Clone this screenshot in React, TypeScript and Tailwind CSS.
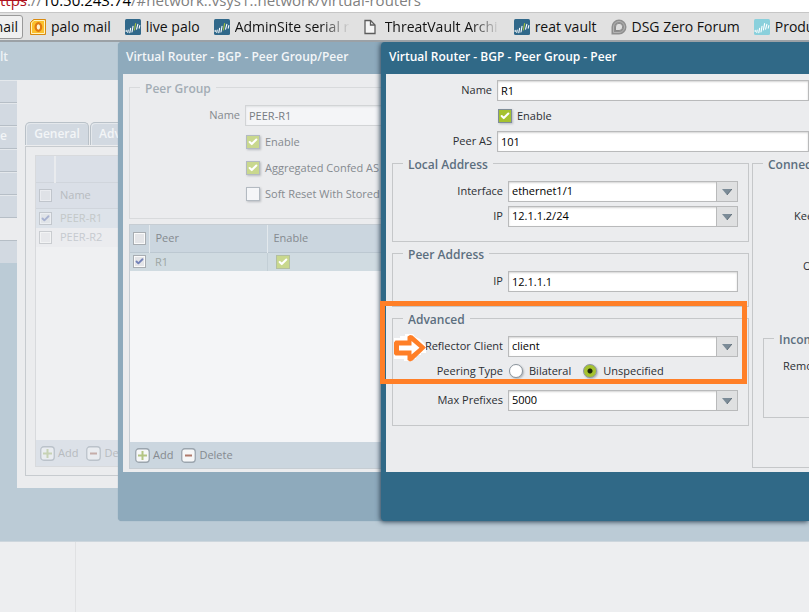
import React from "react";
import { Check } from "lucide-react";
import clsx from "clsx";

/* ─── ICONS ─── */

function PaloIcon({ light }: { light?: boolean }) {
  return (
    <svg viewBox="0 0 16 16" className="w-4 h-4 shrink-0" aria-hidden="true">
      <rect width="16" height="16" rx="1.5" fill={light ? "#8ad0dc" : "#30688a"} />
      <g stroke="#fff" strokeWidth="1.1" strokeLinecap="round">
        <path d="M1.2 11.4v1M3.2 11l-.4 2.4M5.6 9.4l-.8 4.2M8 7.4l-1 5.6M12.8 5.4l-1.2 4.8M14.8 6.6l-.6 2.6" />
        <path d="M10.6 4.6L9.4 11" stroke={light ? "#fff" : "#a6c43a"} />
      </g>
    </svg>
  );
}

function OutlookIcon() {
  return (
    <svg viewBox="0 0 16 16" className="w-4 h-4 shrink-0" aria-hidden="true">
      <path d="M3.5.5h12v15H.5V3.5z" fill="#fbc02d" stroke="#d98a10" />
      <path d="M1.5 4L4 1.5h10.5v13h-13z" fill="none" stroke="#fff3bf" />
      <ellipse cx="8.4" cy="8" rx="2.8" ry="3.8" fill="#fff3d0" stroke="#e07a10" strokeWidth="2.2" />
    </svg>
  );
}

function PageIcon() {
  return (
    <svg viewBox="0 0 16 16" className="w-4 h-4 shrink-0" aria-hidden="true">
      <path d="M1 1.5h5.5L11 6v8.5H1z" fill="#f5f5f5" stroke="#5c5c5c" strokeWidth="1.3" />
      <path d="M6.5 1.5V6H11" fill="none" stroke="#5c5c5c" strokeWidth="1.3" />
    </svg>
  );
}

function ForumIcon() {
  return (
    <svg viewBox="0 0 16 16" className="w-4 h-4 shrink-0" aria-hidden="true">
      <path d="M.5 15.5V8A7.5 7.5 0 1 1 8 15.5z" fill="#8f8f8f" />
      <path d="M2.5 13.5V8A5.5 5.5 0 1 1 8 13.5z" fill="none" stroke="#b4b4b4" strokeWidth="1" />
      <path d="M4.5 11.5V8A3.6 3.6 0 1 1 8.2 11.5z" fill="#dedede" stroke="#7d7d7d" strokeWidth=".8" />
    </svg>
  );
}

function ToolIcon({ kind, faint }: { kind: "add" | "delete"; faint?: boolean }) {
  const add = kind === "add";
  return (
    <svg viewBox="0 0 15 15" className={clsx("w-[15px] h-[15px] shrink-0", faint && "opacity-50")} aria-hidden="true">
      <rect x=".75" y=".75" width="13.5" height="13.5" rx="3" fill="#f6f7f8" stroke="#9ba5ae" strokeWidth="1.3" />
      <path d={add ? "M7.5 3v9M3 7.5h9" : "M4 7.5h7"} stroke={add ? "#b4c583" : "#b07a6c"} strokeWidth="2" />
    </svg>
  );
}

/* ─── FORM CONTROLS ─── */

const inputCls =
  "w-full h-[21px] px-[3px] border border-[#b9babb] bg-white text-black shadow-[inset_0_1px_2px_#d4d4d4] outline-none rounded-none";

function Row({ label, id, children }: { label?: string; id?: string; children: React.ReactNode }) {
  return (
    <div className="flex items-start gap-[5px]">
      <label htmlFor={id} className="w-[100px] h-5 leading-5 shrink-0 text-right whitespace-nowrap">{label}</label>
      <div className="flex-1 min-w-0">{children}</div>
    </div>
  );
}

function Combo({ id, value }: { id: string; value: string }) {
  return (
    <div className="relative">
      <select id={id} defaultValue={value} className={clsx(inputCls, "appearance-none pr-6")}>
        <option>{value}</option>
      </select>
      <span className="absolute top-0 right-0 w-[22px] h-[21px] flex items-center justify-center bg-[#dfe0e1] border border-[#b9babb] pointer-events-none">
        <svg viewBox="0 0 10 6" className="w-[10px] h-[6px]" aria-hidden="true">
          <path d="M0 0h10L5 6z" fill="#7b8b97" />
          <path d="M10 0L5 6" stroke="#4f5c67" strokeWidth=".8" />
        </svg>
      </span>
    </div>
  );
}

function Tick({ label, checked, faded }: { label: string; checked?: boolean; faded?: boolean }) {
  return (
    <label className="flex items-center gap-[5px] h-5 pl-px whitespace-nowrap">
      <span className="relative w-3.5 h-3.5 shrink-0">
        <input
          type="checkbox"
          defaultChecked={checked}
          className={clsx(
            "peer block appearance-none w-3.5 h-3.5 border bg-[#f5f6f8] shadow-[1px_1px_2px_#b9bcc0]",
            faded ? "border-[#b3bac1] checked:bg-[#c9d88e]" : "border-[#7f8d98] checked:bg-[#a5c22f]"
          )}
        />
        <Check strokeWidth={5} className="absolute top-0.5 left-0.5 w-2.5 h-2.5 text-white hidden peer-checked:block pointer-events-none" />
      </span>
      <span>{label}</span>
    </label>
  );
}

function GridCheck({ name, checked, faint }: { name: string; checked?: boolean; faint?: boolean }) {
  return (
    <span className={clsx("relative block w-[13px] h-[13px] mx-auto", faint && "opacity-50")}>
      <input
        type="checkbox"
        aria-label={name}
        defaultChecked={checked}
        className="block appearance-none w-[13px] h-[13px] border border-[#a8adb2] bg-[#e4e5e8] shadow-[inset_0_0_0_1px_#fafafa]"
      />
      {checked && <Check strokeWidth={5} className="absolute top-0.5 left-0.5 w-[9px] h-[9px] text-[#7483b8] pointer-events-none" />}
    </span>
  );
}

function Group({ title, className, titleClass, children }: {
  title: string;
  className?: string;
  titleClass?: string;
  children: React.ReactNode;
}) {
  return (
    <fieldset className={clsx("min-w-0 border px-2.5 pt-2", className)}>
      <legend className={clsx("px-[5px] h-5 pt-1 leading-4 text-[12px] font-semibold whitespace-nowrap", titleClass)}>{title}</legend>
      {children}
    </fieldset>
  );
}

/* ─── BROWSER CHROME ─── */

const bookmarks = [
  { label: "palo mail", icon: <OutlookIcon /> },
  { label: "live palo", icon: <PaloIcon /> },
  { label: "AdminSite serial r", icon: <PaloIcon />, fade: true },
  { label: "ThreatVault Archi", icon: <PageIcon />, fade: true },
  { label: "reat vault", icon: <PaloIcon /> },
  { label: "DSG Zero Forum", icon: <ForumIcon /> },
  { label: "Produ", icon: <PaloIcon light /> },
];

function BrowserBars() {
  return (
    <header className="shrink-0 whitespace-nowrap">
      <div className="h-3 flex items-end overflow-hidden bg-white text-[15px] leading-6 text-[#808080]">
        <p>
          <span className="text-[#b01020] line-through">ttps</span>://<span className="text-black">10.50.243.74</span>
          /#network::vsys1::network/virtual-routers
        </p>
      </div>
      <nav className="h-[30px] flex items-center gap-3.5 overflow-hidden border-t border-b-2 border-t-[#c6c6c6] border-b-[#9ba1a6] bg-[#e1e1e1] text-[14px] text-[#111]">
        <a href="#mail" className="-ml-1 -mr-[7px] h-6 w-[27px] shrink-0 flex items-center justify-end pr-1 border border-[#999] rounded-[3px] bg-[#f0f0f0]">mail</a>
        {bookmarks.map((b) => (
          <a key={b.label} href="#bookmark" className="flex items-center gap-[5px] shrink-0">
            {b.icon}
            <span className={clsx(b.fade && "w-[115px] overflow-hidden bg-linear-to-r from-[#111] from-75% to-transparent bg-clip-text text-transparent")}>
              {b.label}
            </span>
          </a>
        ))}
      </nav>
    </header>
  );
}

/* ─── WINDOWS ─── */

function RouterWindow() {
  return (
    <section className="absolute top-0 inset-x-0 pb-[53px] bg-[#bbcbd6] border-b border-[#cdd6dd] text-[#b7bbbf]">
      <h2 className="h-[38px] leading-[30px] text-[12px] font-semibold text-[#eef2f5]">lt</h2>
      <div className="flex">
        <ul className="w-[17px] shrink-0 text-[12px] font-semibold text-[#f3f5f7]">
          {["", "", "e", "", "", ""].map((t, i) => (
            <li key={i} className="h-[23px] leading-[20px] bg-[#d2d9e1] border-b border-[#b6bec6] shadow-[inset_0_1px_0_#e4e8ec]">{t}</li>
          ))}
          <li className="h-[22px] bg-[#ebecee]" />
          <li className="h-[23px] bg-[#d2d9e1] border-t border-[#b6bec6]" />
        </ul>
        <div className="flex-1 min-w-0 bg-[#ebecee] pt-[42px] pl-2 pb-3">
          <div className="flex gap-px font-semibold text-[12px] text-[#f3f5f7]" role="tablist">
            <button role="tab" className="w-16 h-[23px] border border-b-0 border-[#b9c1c8] rounded-t-[5px] bg-[#d2d9e1] shadow-[inset_1px_1px_0_#e4e8ec]">General</button>
            <button role="tab" className="w-20 h-[23px] pl-2 text-left border border-b-0 border-[#b9c1c8] rounded-t-[5px] bg-[#d2d9e1] shadow-[inset_1px_1px_0_#e4e8ec]">Adv</button>
          </div>
          <div className="mt-px pt-2 pl-[9px] pb-2 border border-[#c7cbcf]">
            <div className="border border-[#d8dadd] bg-[#eff0f2]">
              <table className="w-full table-fixed border-collapse text-left">
                <colgroup><col className="w-[19px]" /><col /></colgroup>
                <thead className="bg-[#dadfe7]">
                  <tr className="h-[26px] border-b border-[#d0d5dc]">
                    <td className="border-r-2 border-[#e9ebee]" /><td />
                  </tr>
                  <tr className="h-[26px] border-b border-[#d0d5dc]">
                    <td><GridCheck name="Select all peer groups" faint /></td>
                    <th className="pl-[5px] font-normal">Name</th>
                  </tr>
                </thead>
                <tbody>
                  <tr className="h-5 bg-[#dde3ea]">
                    <td><GridCheck name="Select PEER-R1" checked faint /></td>
                    <td className="pl-[5px] text-[#c3c8c8]">PEER-R1</td>
                  </tr>
                  <tr className="h-[19px] bg-[#ebecef]">
                    <td><GridCheck name="Select PEER-R2" faint /></td>
                    <td className="pl-[5px] text-[#c6cacf]">PEER-R2</td>
                  </tr>
                </tbody>
              </table>
              <div className="h-[193px]" />
              <div className="h-[26px] pl-1 flex items-center gap-2 bg-[#dce1e8]">
                <button className="flex items-center gap-[3px]"><ToolIcon kind="add" faint />Add</button>
                <button className="flex items-center gap-[3px]"><ToolIcon kind="delete" faint />De</button>
              </div>
            </div>
          </div>
        </div>
      </div>
    </section>
  );
}

function PeerGroupWindow() {
  return (
    <section className="absolute top-0 left-[118px] right-0 pl-[5px] pb-[49px] rounded-[4px] bg-[#8eaabc] shadow-[0_0_1px_#7f9bae] text-[#858a8f]">
      <h2 className="h-8 leading-[30px] pl-[3px] text-[12px] font-semibold text-[#f3f6f8]">Virtual Router - BGP - Peer Group/Peer</h2>
      <div className="bg-[#ebecee] pt-[3px] pl-1.5 pb-[3px]">
        <Group title="Peer Group" className="border-[#d8dadc] pb-3.5" titleClass="text-[#a3adb5]">
          <div className="flex flex-col gap-1.5">
            <Row label="Name" id="group-name">
              <input id="group-name" defaultValue="PEER-R1" className="w-full h-[21px] px-[3px] border border-[#d2d4d6] bg-[#f4f5f7] text-[#777c82] shadow-[inset_0_1px_2px_#dfe1e3] outline-none" />
            </Row>
            <Row><Tick label="Enable" checked faded /></Row>
            <Row><Tick label="Aggregated Confed AS" checked faded /></Row>
            <Row><Tick label="Soft Reset With Stored" faded /></Row>
          </div>
        </Group>
        <div className="mt-[5px] border border-[#c6cdd3] bg-[#f4f5f7]">
          <table className="w-full table-fixed border-collapse text-left">
            <colgroup><col className="w-[19px]" /><col className="w-[118px]" /><col /></colgroup>
            <thead>
              <tr className="h-[27px] bg-[#cbd6df] border-b border-[#bcc8d1]">
                <td className="border-r border-[#e3e9ed]"><GridCheck name="Select all peers" /></td>
                <th className="pl-1.5 font-normal border-r border-[#e3e9ed]">Peer</th>
                <th className="pl-1.5 font-normal">Enable</th>
              </tr>
            </thead>
            <tbody>
              <tr className="h-[19px] bg-[#d0dbe1]">
                <td><GridCheck name="Select R1" checked /></td>
                <td className="pl-1.5 text-[#9da6a3] border-r border-[#c3cfd6]">R1</td>
                <td className="pl-2">
                  <span className="flex items-center justify-center w-3.5 h-3.5 bg-[#c9d88e] border border-[#b3bfa0]">
                    <Check strokeWidth={5} className="w-2.5 h-2.5 text-white" />
                  </span>
                </td>
              </tr>
            </tbody>
          </table>
          <div className="h-[171px]" />
          <div className="h-[26px] pl-[5px] flex items-center gap-2 bg-[#cbd6df]">
            <button className="flex items-center gap-[3px]"><ToolIcon kind="add" />Add</button>
            <button className="flex items-center gap-[3px]"><ToolIcon kind="delete" />Delete</button>
          </div>
        </div>
      </div>
    </section>
  );
}

const radioCls =
  "appearance-none w-3.5 h-3.5 rounded-full border border-[#8a949c] bg-white shadow-[1px_1px_2px_#b0b4b8] checked:bg-[radial-gradient(circle,#1c2408_2px,#a5c22f_3px)]";

function PeerWindow() {
  return (
    <section className="absolute top-0 left-[381px] right-0 pl-[5px] pb-[49px] rounded-l-[4px] bg-[#306987] shadow-[-1px_1px_5px_#33485a] text-[#2b2f33]">
      <h2 className="h-8 leading-[30px] pl-[3px] text-[12px] font-semibold text-white">Virtual Router - BGP - Peer Group - Peer</h2>
      <div className="bg-[#ebecee] pt-1.5 pl-1.5 pb-1 overflow-hidden">
        <div className="flex flex-col gap-[5px]">
          <Row label="Name" id="peer-name"><input id="peer-name" defaultValue="R1" className={inputCls} /></Row>
          <Row><Tick label="Enable" checked /></Row>
          <Row label="Peer AS" id="peer-as"><input id="peer-as" defaultValue="101" className={inputCls} /></Row>
        </div>

        <div className="flex gap-[3px] mt-px">
          <div className="w-[357px] shrink-0 flex flex-col gap-px">
            <Group title="Local Address" className="border-[#c5c7c9] pb-3.5" titleClass="text-[#5c6f7f]">
              <div className="flex flex-col gap-1">
                <Row label="Interface" id="iface"><Combo id="iface" value="ethernet1/1" /></Row>
                <Row label="IP" id="local-ip"><Combo id="local-ip" value="12.1.1.2/24" /></Row>
              </div>
            </Group>
            <Group title="Peer Address" className="border-[#c5c7c9] pb-3.5" titleClass="text-[#5c6f7f]">
              <Row label="IP" id="peer-ip"><input id="peer-ip" defaultValue="12.1.1.1" className={inputCls} /></Row>
            </Group>
            <Group title="Advanced" className="border-[#c5c7c9] pb-3.5" titleClass="text-[#5c6f7f]">
              <div className="flex flex-col gap-1">
                <Row label="Reflector Client" id="reflector"><Combo id="reflector" value="client" /></Row>
                <div className="h-[25px]">
                  <Row label="Peering Type">
                    <div className="h-5 flex items-center gap-3 pl-px">
                      <label className="flex items-center gap-1.5"><input type="radio" name="peering" className={radioCls} />Bilateral</label>
                      <label className="flex items-center gap-1.5"><input type="radio" name="peering" defaultChecked className={radioCls} />Unspecified</label>
                    </div>
                  </Row>
                </div>
                <Row label="Max Prefixes" id="prefixes"><Combo id="prefixes" value="5000" /></Row>
              </div>
            </Group>
          </div>

          <Group title="Connec" className="flex-1 border-r-0 border-[#c5c7c9] pr-0 pb-[49px]" titleClass="text-[#5c6f7f]">
            <p className="mt-[25px] pl-[31px] h-5 leading-5">Kee</p>
            <p className="mt-[30px] pl-10 h-5 leading-5">O</p>
            <Group title="Incom" className="mt-[52px] border-r-0 border-[#c5c7c9] pr-0 pb-[41px]" titleClass="text-[#5c6f7f]">
              <p className="pl-[9px] h-5 leading-5">Remo</p>
            </Group>
          </Group>
        </div>
      </div>
    </section>
  );
}

/* ─── ANNOTATION ─── */

function Highlight() {
  return (
    <div className="absolute top-[259px] left-[380px] w-[367px] h-[83px] border-[5px] border-[#ff7f27] pointer-events-none">
      <svg viewBox="0 0 34 28" className="absolute top-[28px] left-2 w-[34px] h-7" aria-hidden="true">
        <path d="M1 4h6V2h5V0h8l2 3 5 2 3 3 3 4v7h-5v2h-5v4h-4v2H11v-2H1z" fill="#fff" />
        <path d="M1 8.5L2.5 6.5H14.5V2.5L17 1 19.5 1.5 33 13.5 19.5 26.5 17 27.5 14.5 26V21.5H2.5L1 20z" fill="#ff7f27" />
        <path d="M6 11.5H18.5V7L26.5 13.8 18.5 20.5V16.5H6z" fill="#fff" />
      </svg>
    </div>
  );
}

export default function App() {
  return (
    <div className="h-screen flex flex-col overflow-hidden font-['Open_Sans','Noto_Sans',sans-serif] text-[11px]">
      <BrowserBars />
      <main className="relative flex-1 overflow-hidden bg-[#edeef0]">
        <div className="h-full w-[76px] border-r border-[#e0e1e3]" />
        <RouterWindow />
        <PeerGroupWindow />
        <PeerWindow />
        <Highlight />
      </main>
    </div>
  );
}
